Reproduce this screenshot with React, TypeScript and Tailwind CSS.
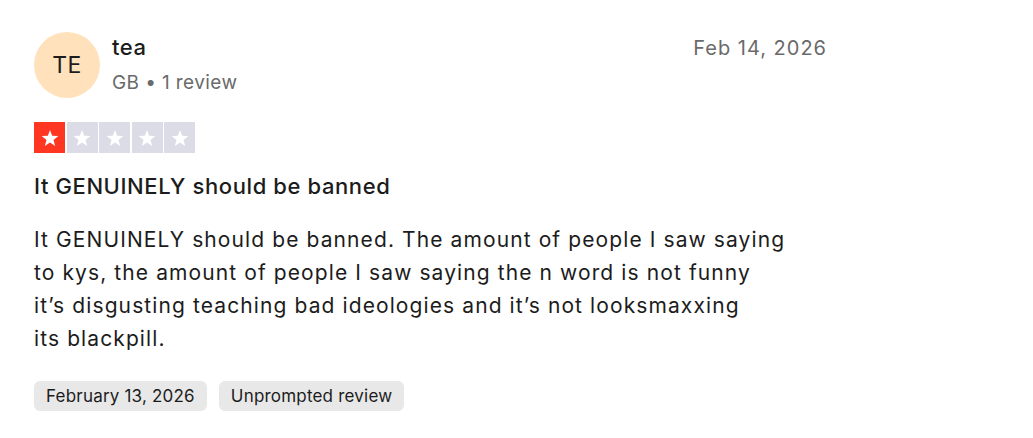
import React from "react";

const Star = ({ filled }: { filled: boolean }) => (
  <div className={`flex h-[31px] w-[31px] items-center justify-center ${filled ? "bg-[#ff3722]" : "bg-[#dcdce6]"}`}>
    <svg viewBox="0 0 24 24" width="20" height="20" fill="#ffffff">
      <path d="M12 2.5l2.6 6.9 7.4.3-5.8 4.6 2 7.2L12 17.3 5.8 21.5l2-7.2L2 9.7l7.4-.3z" />
    </svg>
  </div>
);

export default function App() {
  return (
    <div className="min-h-screen w-full bg-white text-[#1c1c1c]" style={{ fontFamily: "Inter, 'Noto Sans', sans-serif" }}>
      <div className="w-[827px] pl-[34px] pt-[32px]">
        <div className="flex items-start">
          <div className="flex h-[66px] w-[66px] shrink-0 items-center justify-center rounded-full bg-[#ffe1bb] text-[23px] font-normal tracking-[0.5px] text-[#1c1c1c]">
            TE
          </div>
          <div className="ml-[12px] flex-1">
            <div className="flex items-start justify-between">
              <div className="mt-[1px] text-[22px] font-medium leading-[28px] tracking-[0.5px]">tea</div>
              <div className="mt-[2px] text-[20px] leading-[28px] tracking-[1px] text-[#6a6a6a]">Feb 14, 2026</div>
            </div>
            <div className="mt-[9px] text-[19px] leading-[24px] tracking-[0.4px] text-[#6a6a6a]">GB • 1 review</div>
          </div>
        </div>
        <div className="mt-[24px] flex gap-[1.5px]">
          <Star filled />
          <Star filled={false} />
          <Star filled={false} />
          <Star filled={false} />
          <Star filled={false} />
        </div>
        <div className="mt-[19px] text-[22px] font-medium leading-[28px] tracking-[0.6px]">It GENUINELY should be banned</div>
        <p className="mt-[23px] text-[21px] leading-[33px] tracking-[1.1px]">
          It GENUINELY should be banned. The amount of people I saw saying
          <br />
          to kys, the amount of people I saw saying the n word is not funny
          <br />
          it’s disgusting teaching bad ideologies and it’s not looksmaxxing
          <br />
          its blackpill.
        </p>
        <div className="mt-[26px] flex gap-[12px]">
          <span className="rounded-[6px] bg-[#e8e8e8] px-[12px] py-[4px] text-[17px] leading-[22px] tracking-[0.2px]">February 13, 2026</span>
          <span className="rounded-[6px] bg-[#e8e8e8] px-[12px] py-[4px] text-[17px] leading-[22px] tracking-[0.2px]">Unprompted review</span>
        </div>
      </div>
    </div>
  );
}
